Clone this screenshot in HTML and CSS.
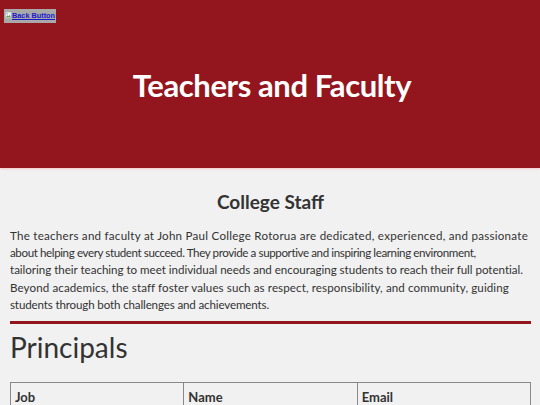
FILE: index.html
```html
<!DOCTYPE html>
<html>
<head>
<meta charset="utf-8">
<link rel="stylesheet" href="styles.css">
</head>
<body>
<header class="hero">
  <a class="back" href="#"><svg class="broken" viewBox="0 0 12 13"><rect x="0.5" y="0.5" width="10" height="11" fill="#f4f4f4" stroke="#9aa" /><path d="M1.5 10 L4 6 L6 8 L8 5 L10 10 Z" fill="#5a9a4a"/><circle cx="3.5" cy="3.5" r="1.3" fill="#6aa0d8"/></svg><span class="back-text">Back Button</span></a>
  <h1 class="hero-title">Teachers and Faculty</h1>
</header>
<main class="content">
  <h2 class="section-title">College Staff</h2>
  <p class="intro"><span class="l1">The teachers and faculty at John Paul College Rotorua are dedicated, experienced, and passionate</span><br>
  <span class="l2">about helping every student succeed. They provide a supportive and inspiring learning environment,</span><br>
  <span class="l3">tailoring their teaching to meet individual needs and encouraging students to reach their full potential.</span><br>
  <span class="l4">Beyond academics, the staff foster values such as respect, responsibility, and community, guiding</span><br>
  <span class="l5">students through both challenges and achievements.</span></p>
  <hr class="divider">
  <h2 class="group-title">Principals</h2>
  <table class="staff">
    <thead>
      <tr><th>Job</th><th>Name</th><th>Email</th></tr>
    </thead>
  </table>
</main>
</body>
</html>
```
FILE: styles.css
```css
html, body {
  margin: 0;
  padding: 0;
}
body {
  background: #f1f1f1;
  font-family: "Lato", "Noto Sans", sans-serif;
  color: #333;
}
.hero {
  background: #93161f;
  height: 168px;
  box-shadow: 0 1px 2px #f4c8cc;
  padding: 4px 0 0 4px;
  box-sizing: border-box;
}
.back {
  display: inline-flex;
  align-items: center;
  background: #a9a9a9;
  height: 14px;
  padding: 0 1px;
  color: #1a1acc;
  font-family: "Liberation Sans", sans-serif;
  font-weight: 700;
  font-size: 7.3px;
  text-decoration: underline;
}
.broken {
  width: 7px;
  height: 9px;
  margin-right: 0;
}
.hero-title {
  margin: 43px 0 0 0;
  text-align: center;
  color: #fff;
  font-family: "Lato", sans-serif;
  font-weight: 700;
  font-size: 31px;
  letter-spacing: -0.4px;
}
.content {
  padding: 0 9px 0 10px;
}
.section-title {
  margin: 22px 0 0 0;
  text-align: center;
  font-size: 19px;
  font-weight: 700;
  color: #333;
}
.intro {
  margin: 14px 0 0 0;
  font-size: 11.6px;
  line-height: 17.2px;
  color: #333;
}
.l1 { letter-spacing: 0.25px; }
.l2 { letter-spacing: -0.4px; }
.l3 { letter-spacing: -0.03px; }
.l4 { letter-spacing: 0.1px; }
.l5 { letter-spacing: -0.15px; }
.divider {
  border: 0;
  height: 3px;
  background: #93161f;
  margin: 8px 0 0 0;
}
.group-title {
  margin: 6px 0 0 0;
  font-size: 28px;
  font-weight: 400;
  color: #333;
}
.staff {
  margin-top: 18px;
  width: 100%;
  border-collapse: collapse;
}
.staff th {
  border: 1px solid #888;
  text-align: left;
  font-size: 13px;
  font-weight: 700;
  padding: 6px 4px;
  width: 33.3%;
}
```
